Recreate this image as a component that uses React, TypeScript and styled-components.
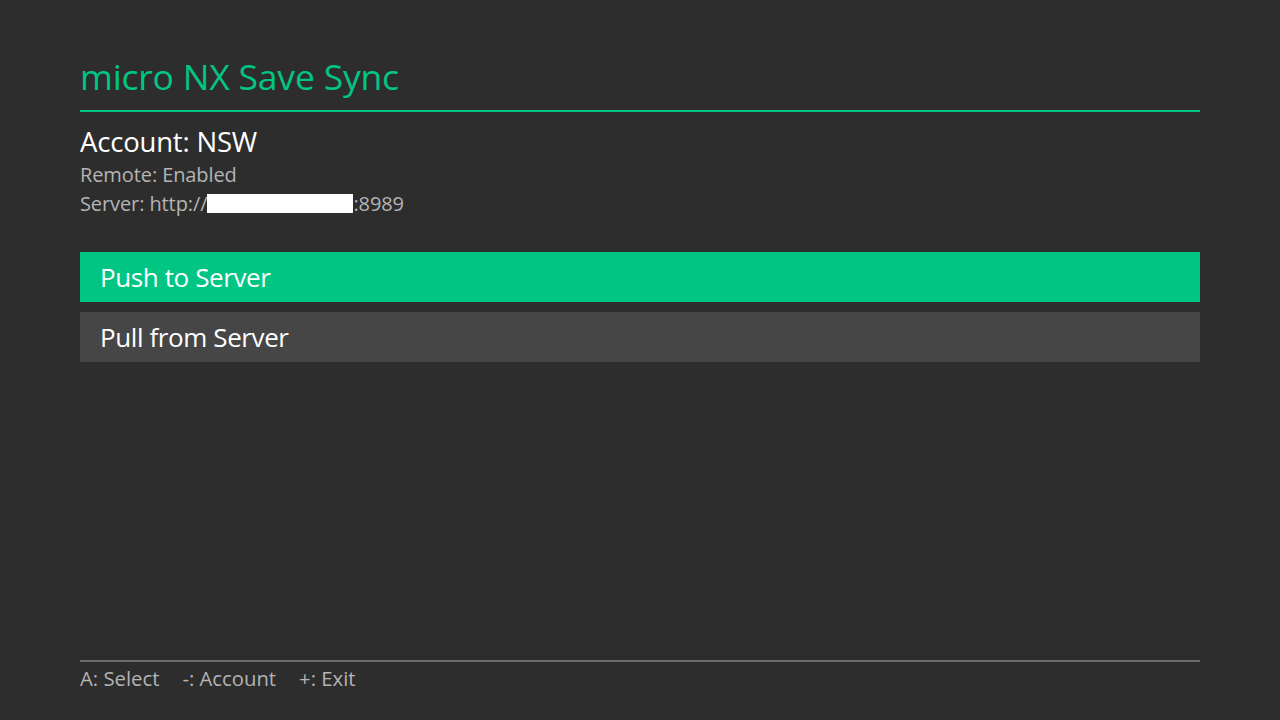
import React from "react";
import styled, { createGlobalStyle } from "styled-components";

const GlobalStyle = createGlobalStyle`
  html, body { margin: 0; padding: 0; background: #2d2d2d; }
  body { font-family: "Open Sans", "Noto Sans", sans-serif; }
`;

const Screen = styled.div`
  width: 1280px;
  height: 720px;
  box-sizing: border-box;
  padding: 0 80px;
  display: flex;
  flex-direction: column;
  background: #2d2d2d;
  color: #ffffff;
`;

const Header = styled.header`
  height: 112px;
  box-sizing: border-box;
  display: flex;
  align-items: flex-end;
  padding-bottom: 16px;
  border-bottom: 2px solid #00c583;
`;

const Title = styled.h1`
  margin: 0;
  font-size: 35.5px;
  font-weight: 400;
  line-height: 1;
  color: #00c583;
  letter-spacing: -0.2px;
`;

const Info = styled.section`
  display: flex;
  flex-direction: column;
  padding-top: 14px;
`;

const AccountLine = styled.div`
  font-size: 27.5px;
  line-height: 32px;
  color: #ffffff;
  letter-spacing: -0.2px;
`;

const Detail = styled.div`
  font-size: 20px;
  line-height: 29px;
  color: #b4b4b4;
  letter-spacing: -0.1px;
  display: flex;
  align-items: center;
`;

const Remote = styled(Detail)`
  margin-top: 2px;
`;

const Redacted = styled.span`
  display: inline-block;
  width: 146px;
  height: 19px;
  background: #ffffff;
`;

const Menu = styled.nav`
  display: flex;
  flex-direction: column;
  gap: 10px;
  margin-top: 34px;
`;

const MenuItem = styled.div<{ $active?: boolean }>`
  height: 50px;
  display: flex;
  align-items: center;
  padding-left: 20px;
  font-size: 26px;
  color: #ffffff;
  letter-spacing: -0.4px;
  background: ${(p) => (p.$active ? "#00c583" : "#464646")};
`;

const Footer = styled.footer`
  margin-top: auto;
  border-top: 2px solid #6b6b6b;
  height: 60px;
  box-sizing: border-box;
  display: flex;
  gap: 23px;
  padding-top: 0;
  align-items: flex-start;
`;

const Hint = styled.span`
  font-size: 20.3px;
  line-height: 32px;
  color: #b4b4b4;
  letter-spacing: 0;
`;

export default function App() {
  return (
    <>
      <GlobalStyle />
      <Screen>
        <Header>
          <Title>micro NX Save Sync</Title>
        </Header>
        <Info>
          <AccountLine>Account: NSW</AccountLine>
          <Remote>Remote: Enabled</Remote>
          <Detail>
            Server: http://
            <Redacted />
            :8989
          </Detail>
        </Info>
        <Menu>
          <MenuItem $active>Push to Server</MenuItem>
          <MenuItem>Pull from Server</MenuItem>
        </Menu>
        <Footer>
          <Hint>A: Select</Hint>
          <Hint>-: Account</Hint>
          <Hint>+: Exit</Hint>
        </Footer>
      </Screen>
    </>
  );
}
